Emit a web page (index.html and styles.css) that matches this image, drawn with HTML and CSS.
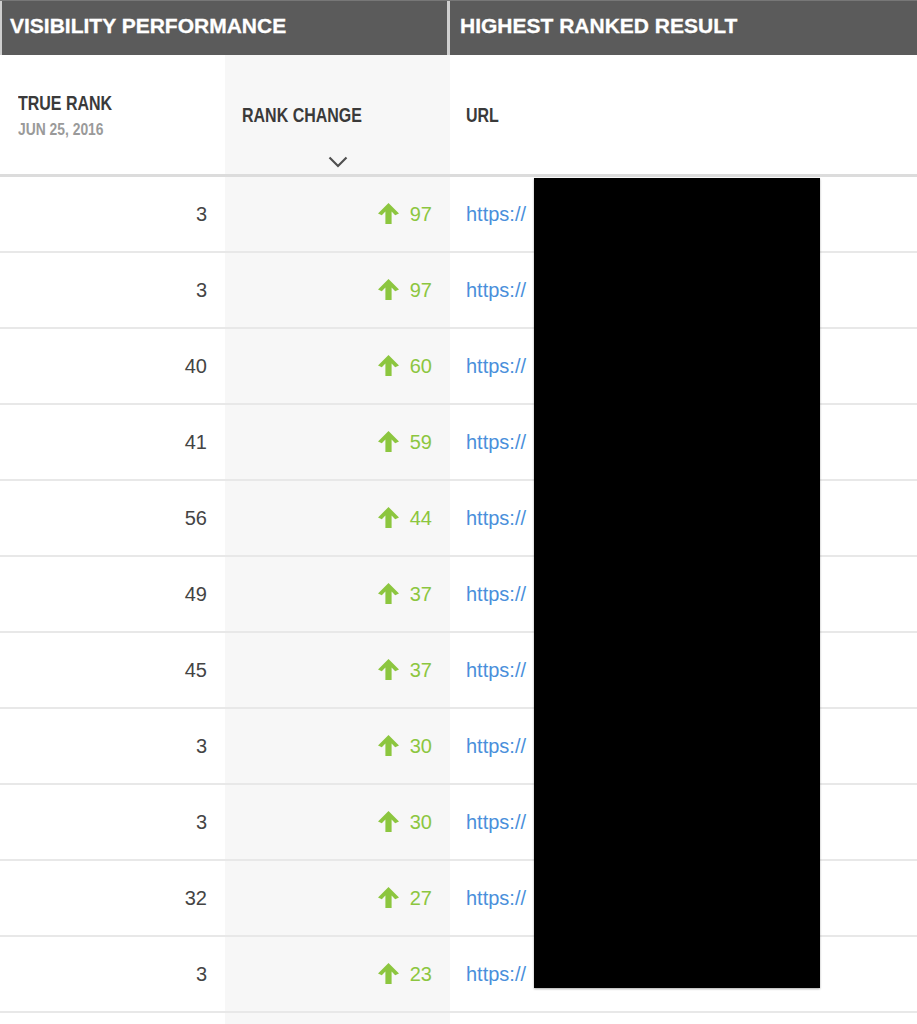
FILE: index.html
```html
<!DOCTYPE html>
<html lang="en">
  <head>
    <meta charset="utf-8" />
    <title>Rank changes</title>
    <link rel="stylesheet" href="styles.css">
  </head>
  <body>
    <div class="report">
      <div class="group-head">
        <div class="group visibility">VISIBILITY PERFORMANCE</div>
        <div class="group result">HIGHEST RANKED RESULT</div>
      </div>

      <div class="col-head">
        <div class="th true-rank">
          <span class="label">TRUE RANK</span>
          <span class="date">JUN 25, 2016</span>
        </div>
        <div class="th rank-change">
          <span class="label">RANK CHANGE</span>
          <svg class="sort" width="20" height="12" viewBox="0 0 20 12"><polyline points="1.5,1.5 10,10 18.5,1.5" fill="none" stroke="#505050" stroke-width="2.2"/></svg>
        </div>
        <div class="th url">
          <span class="label">URL</span>
        </div>
      </div>

      <ul class="rows">
        <li><span class="rank">3</span><span class="change"><svg class="up" width="21" height="21" viewBox="0 0 21 21"><path d="M10.5 0 L21 10.5 L17.2 12.2 L13.6 8.4 L13.6 21 L7.4 21 L7.4 8.4 L3.8 12.2 L0 10.5 Z"/></svg>97</span><a class="link" href="#">https://</a></li>
        <li><span class="rank">3</span><span class="change"><svg class="up" width="21" height="21" viewBox="0 0 21 21"><path d="M10.5 0 L21 10.5 L17.2 12.2 L13.6 8.4 L13.6 21 L7.4 21 L7.4 8.4 L3.8 12.2 L0 10.5 Z"/></svg>97</span><a class="link" href="#">https://</a></li>
        <li><span class="rank">40</span><span class="change"><svg class="up" width="21" height="21" viewBox="0 0 21 21"><path d="M10.5 0 L21 10.5 L17.2 12.2 L13.6 8.4 L13.6 21 L7.4 21 L7.4 8.4 L3.8 12.2 L0 10.5 Z"/></svg>60</span><a class="link" href="#">https://</a></li>
        <li><span class="rank">41</span><span class="change"><svg class="up" width="21" height="21" viewBox="0 0 21 21"><path d="M10.5 0 L21 10.5 L17.2 12.2 L13.6 8.4 L13.6 21 L7.4 21 L7.4 8.4 L3.8 12.2 L0 10.5 Z"/></svg>59</span><a class="link" href="#">https://</a></li>
        <li><span class="rank">56</span><span class="change"><svg class="up" width="21" height="21" viewBox="0 0 21 21"><path d="M10.5 0 L21 10.5 L17.2 12.2 L13.6 8.4 L13.6 21 L7.4 21 L7.4 8.4 L3.8 12.2 L0 10.5 Z"/></svg>44</span><a class="link" href="#">https://</a></li>
        <li><span class="rank">49</span><span class="change"><svg class="up" width="21" height="21" viewBox="0 0 21 21"><path d="M10.5 0 L21 10.5 L17.2 12.2 L13.6 8.4 L13.6 21 L7.4 21 L7.4 8.4 L3.8 12.2 L0 10.5 Z"/></svg>37</span><a class="link" href="#">https://</a></li>
        <li><span class="rank">45</span><span class="change"><svg class="up" width="21" height="21" viewBox="0 0 21 21"><path d="M10.5 0 L21 10.5 L17.2 12.2 L13.6 8.4 L13.6 21 L7.4 21 L7.4 8.4 L3.8 12.2 L0 10.5 Z"/></svg>37</span><a class="link" href="#">https://</a></li>
        <li><span class="rank">3</span><span class="change"><svg class="up" width="21" height="21" viewBox="0 0 21 21"><path d="M10.5 0 L21 10.5 L17.2 12.2 L13.6 8.4 L13.6 21 L7.4 21 L7.4 8.4 L3.8 12.2 L0 10.5 Z"/></svg>30</span><a class="link" href="#">https://</a></li>
        <li><span class="rank">3</span><span class="change"><svg class="up" width="21" height="21" viewBox="0 0 21 21"><path d="M10.5 0 L21 10.5 L17.2 12.2 L13.6 8.4 L13.6 21 L7.4 21 L7.4 8.4 L3.8 12.2 L0 10.5 Z"/></svg>30</span><a class="link" href="#">https://</a></li>
        <li><span class="rank">32</span><span class="change"><svg class="up" width="21" height="21" viewBox="0 0 21 21"><path d="M10.5 0 L21 10.5 L17.2 12.2 L13.6 8.4 L13.6 21 L7.4 21 L7.4 8.4 L3.8 12.2 L0 10.5 Z"/></svg>27</span><a class="link" href="#">https://</a></li>
        <li><span class="rank">3</span><span class="change"><svg class="up" width="21" height="21" viewBox="0 0 21 21"><path d="M10.5 0 L21 10.5 L17.2 12.2 L13.6 8.4 L13.6 21 L7.4 21 L7.4 8.4 L3.8 12.2 L0 10.5 Z"/></svg>23</span><a class="link" href="#">https://</a></li>
        <li><span class="rank"></span><span class="change"></span><span class="link"></span></li>
      </ul>

      <!-- redacted urls -->
      <div class="redact"></div>
    </div>
  </body>
</html>
```

FILE: styles.css
```css
* {
  box-sizing: border-box;
}

body {
  margin: 0;
  font-family: 'Liberation Sans', Arial, Helvetica, sans-serif;
  color: #444;
  background: #fff;
  overflow: hidden;
}

.report {
  position: relative;
}

/* dark group header */
.group-head {
  display: flex;
  background: #cfcfcf;
  gap: 3px;
  padding-left: 2px;
  border-top: 1px solid #777;
}
.group-head .group {
  background: #5b5b5b;
  color: #fff;
  font-weight: bold;
  font-size: 21px;
  height: 54px;
  line-height: 50px;
  -webkit-text-stroke: 0.3px #fff;
}
.group-head .visibility {
  width: 445px;
  padding-left: 8px;
}
.group-head .result {
  flex: 1;
  padding-left: 10px;
}

/* column headers */
.col-head {
  display: grid;
  grid-template-columns: 225px 225px 1fr;
  border-bottom: 3px solid #dcdcdc;
}
.col-head .th {
  height: 119px;
  display: flex;
  flex-direction: column;
  justify-content: center;
  align-items: flex-start;
  font-weight: bold;
  color: #3a3a3a;
}
/* condensed look: no narrow face installed, squeeze the regular one */
.col-head .label {
  font-size: 19.5px;
  line-height: 22px;
  transform: scaleX(0.82);
  transform-origin: left center;
  white-space: nowrap;
}
.col-head .true-rank {
  padding: 2px 0 0 18px;
}
.col-head .true-rank .date {
  font-size: 16.5px;
  line-height: 20px;
  margin-top: 5px;
  color: #9a9a9a;
  transform: scaleX(0.84);
  transform-origin: left center;
  white-space: nowrap;
}
.col-head .rank-change {
  background: #f7f7f7;
  justify-content: flex-start;
  padding: 49px 0 0 17px;
}
.col-head .rank-change .sort {
  align-self: center;
  margin: 30px 0 0 -17px;
}
.col-head .url {
  padding-left: 16px;
}

/* rows */
.rows {
  list-style: none;
  margin: 0;
  padding: 0;
}
.rows li {
  display: grid;
  grid-template-columns: 225px 225px 1fr;
  height: 76px;
  border-bottom: 2px solid #e8e8e8;
  font-size: 20px;
  line-height: 74px;
}
.rows .rank {
  text-align: right;
  padding-right: 18px;
  color: #444;
}
.rows .change {
  background: #f7f7f7;
  display: flex;
  align-items: center;
  justify-content: flex-end;
  gap: 11px;
  padding-right: 18px;
  color: #8cc63f;
}
.rows .change .up {
  fill: #8cc63f;
  margin-top: -2px;
}
.rows .link {
  padding-left: 16px;
  color: #4a8fdb;
  text-decoration: none;
}

.redact {
  position: absolute;
  left: 534px;
  top: 178px;
  width: 286px;
  height: 810px;
  background: #000;
  box-shadow: 0 1px 2px #00000055;
}
```
